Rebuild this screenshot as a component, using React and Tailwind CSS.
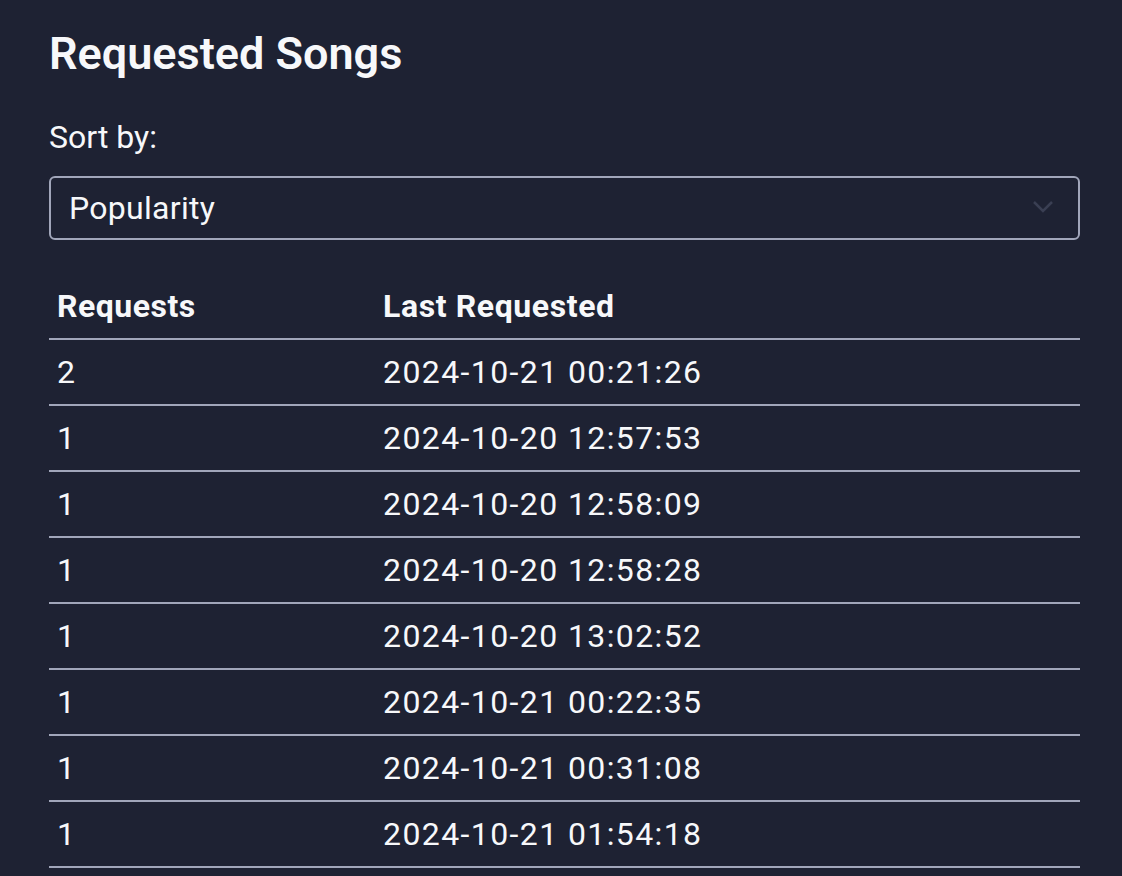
import React from "react";

const rows = [
  ["2", "2024-10-21 00:21:26"],
  ["1", "2024-10-20 12:57:53"],
  ["1", "2024-10-20 12:58:09"],
  ["1", "2024-10-20 12:58:28"],
  ["1", "2024-10-20 13:02:52"],
  ["1", "2024-10-21 00:22:35"],
  ["1", "2024-10-21 00:31:08"],
  ["1", "2024-10-21 01:54:18"],
];

export default function App() {
  return (
    <div
      className="min-h-[876px] w-full bg-[#1e2233] text-[#f7f8fa] overflow-hidden"
      style={{ fontFamily: "Roboto, 'Noto Sans', sans-serif" }}
    >
      <div className="pl-[49px] pr-[42px] pt-[24px]">
        <h1 className="text-[45px] leading-[60px] font-semibold">Requested Songs</h1>
        <div className="mt-[33px] text-[32px] leading-[40px]">Sort by:</div>
        <div className="mt-[19px] h-[64px] rounded-[6px] border-2 border-[#a1a6ba] flex items-center justify-between pl-[18px] pr-[24px]">
          <span className="text-[32px] leading-[40px] tracking-[0.3px]">Popularity</span>
          <svg width="22" height="14" viewBox="0 0 22 14" fill="none" className="mt-[-2px]">
            <path d="M2 2 L11 11 L20 2" stroke="#3a3f53" strokeWidth="2.5" />
          </svg>
        </div>
        <table className="mt-[34px] w-full border-collapse text-[32px] leading-[48px]">
          <thead>
            <tr className="border-b-2 border-[#a1a6ba]">
              <th className="w-[326px] text-left font-bold px-[8px] py-[8px] tracking-[0.5px]">Requests</th>
              <th className="text-left font-bold px-[8px] py-[8px] tracking-[0.6px]">Last Requested</th>
            </tr>
          </thead>
          <tbody>
            {rows.map((r, i) => (
              <tr key={i} className="border-b-2 border-[#a1a6ba]">
                <td className="px-[8px] py-[8px]">{r[0]}</td>
                <td className="px-[8px] py-[8px] tracking-[1.4px]">{r[1]}</td>
              </tr>
            ))}
          </tbody>
        </table>
      </div>
    </div>
  );
}
